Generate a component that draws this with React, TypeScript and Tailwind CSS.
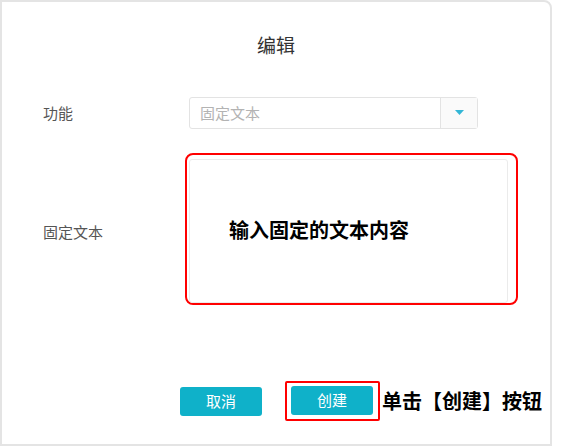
import React from 'react';

const cjk = "font-['Noto_Sans_CJK_SC','Noto_Sans',sans-serif]";

function SelectBox() {
  return (
    <div className="flex h-[32px] w-[289px] rounded-[3px] border border-[#e3e3e3] bg-white">
      <div className="flex flex-1 items-center pl-[10px] text-[15px] text-[#b3b3b3]">固定文本</div>
      <div className="flex w-[37px] items-center justify-center border-l border-[#e3e3e3] bg-[#fafafa]">
        <svg width="9" height="6" viewBox="0 0 9 6">
          <path d="M0 0 L9 0 L4.5 5 Z" fill="#33b6d6" />
        </svg>
      </div>
    </div>
  );
}

export default function App() {
  return (
    <div className={`h-[446px] w-[564px] bg-white ${cjk}`}>
      <div className="flex h-[446px] w-[552px] flex-col rounded-tr-[8px] border-2 border-[#e4e4e4] bg-white pl-[41px]">
        {/* 标题 */}
        <div className="mt-[30px] -ml-[41px] text-center text-[19px] leading-[26px] text-[#333]">编辑</div>

        {/* 功能 */}
        <div className="mt-[39px] flex items-center">
          <div className="w-[146px] text-[15px] text-[#555]">功能</div>
          <SelectBox />
        </div>

        {/* 固定文本 */}
        <div className="mt-[24px] flex items-center">
          <div className="mt-[6px] w-[142px] text-[15px] text-[#555]">固定文本</div>
          <div className="h-[152px] w-[333px] rounded-[8px] border-2 border-[#ff0000] pl-[2px] pr-[8px] pt-[4px]">
            <div className="h-[144px] w-full rounded-[3px] border border-[#ebebeb] pl-[39px] pt-[56px] text-[20px] font-bold leading-[28px] text-black">
              输入固定的文本内容
            </div>
          </div>
        </div>

        {/* 按钮 */}
        <div className="mt-[76px] ml-[137px] flex items-center">
          <button className="h-[29px] w-[82px] rounded-[3px] bg-[#0fb1c9] text-[15px] text-white">取消</button>
          <div className="ml-[23px] rounded-[2px] border-2 border-[#ff0000] pb-[4px] pl-[4px] pr-[5px] pt-[3px]">
            <button className="block h-[29px] w-[82px] rounded-[3px] bg-[#0fb1c9] text-[15px] text-white">创建</button>
          </div>
          <div className="ml-[2px] whitespace-nowrap text-[20px] font-bold text-black">单击【创建】按钮</div>
        </div>
      </div>
    </div>
  );
}
